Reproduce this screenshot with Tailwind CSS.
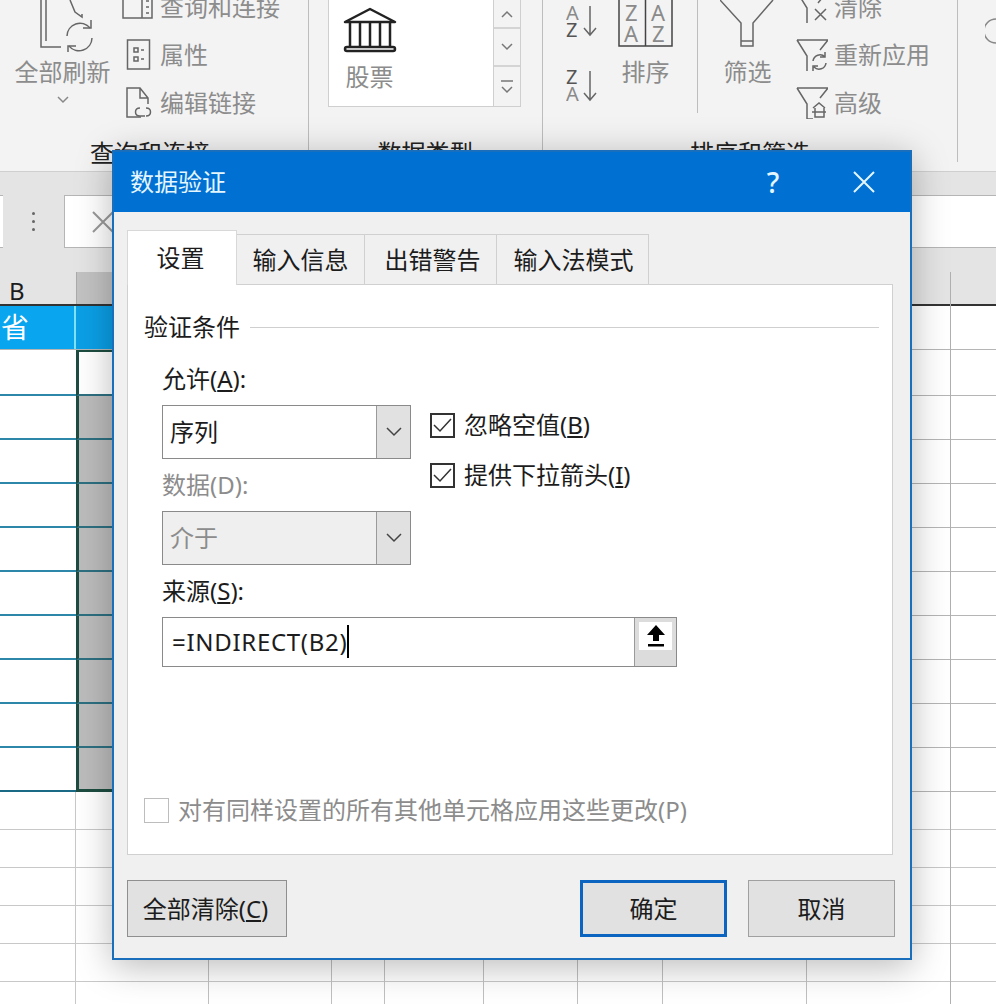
<!DOCTYPE html>
<html lang="zh-CN">
<head>
  <meta charset="UTF-8" />
  <title>数据验证</title>
  <script src="https://cdn.jsdelivr.net/npm/@tailwindcss/browser@4"></script>
</head>
<body class="bg-white">
<div class="relative w-[996px] h-[1004px] overflow-hidden bg-white text-[24px] leading-[30px] text-[#1c1c1c] font-['Noto_Sans','Noto_Sans_CJK_SC',sans-serif]">

  <!-- Ribbon -->
  <div class="flex h-[172px] bg-[#f3f3f3] border-b border-[#cfcfcf] overflow-hidden text-[#8c8c8c]">
    <!-- Queries -->
    <div class="flex flex-col w-[309px] h-[162px] border-r border-[#bdbdbd]">
      <div class="flex h-[138px] shrink-0 pl-[15px]">
        <div class="flex flex-col items-center w-[95px] shrink-0">
          <svg class="w-[95px] h-[52px]" viewBox="0 0 95 52" fill="none" stroke="#666" stroke-width="1.5">
            <path d="M26 0V47H46M31 0V41M55 0l5 12 7 5v-3" />
            <path d="M52 36a13 13 0 0 1 23-8M77 38a13 13 0 0 1-23 8" />
            <path d="M76 20v8h-8M53 54v-8h8" />
          </svg>
          <span class="mt-[5px] whitespace-nowrap">全部刷新</span>
          <svg class="w-[14px] h-[8px] mt-[9px]" viewBox="0 0 14 8" fill="none" stroke="#888" stroke-width="1.5"><path d="M2 1l5 5 5-5" /></svg>
        </div>
        <div class="flex flex-col ml-[12px] -mt-[17px]">
          <div class="flex items-center h-[48px] gap-[6px]">
            <svg class="w-[32px] h-[32px]" viewBox="0 0 32 32" fill="none" stroke="#666" stroke-width="1.5"><path d="M1 0V27H30V0M20 0V27M24 10h3M24 16h3M24 22h3" /></svg>
            <span>查询和连接</span>
          </div>
          <div class="flex items-center h-[48px] gap-[6px]">
            <svg class="w-[32px] h-[32px]" viewBox="0 0 32 32" fill="none" stroke="#666" stroke-width="1.5"><rect x="5.5" y="1" width="22" height="29" /><rect x="12" y="9" width="4" height="4" /><rect x="12" y="18" width="4" height="4" /><path d="M19 11h3M19 20h3" /></svg>
            <span>属性</span>
          </div>
          <div class="flex items-center h-[48px] gap-[6px]">
            <svg class="w-[32px] h-[32px]" viewBox="0 0 32 32" fill="none" stroke="#666" stroke-width="1.5"><path d="M19 30H5V1h13l8 10v6M18 1v10h8" /><path d="M18 21c-6 0-6 8 0 8h5M24 21c6 0 6 8 0 8" /></svg>
            <span>编辑链接</span>
          </div>
        </div>
      </div>
      <div class="h-[24px] shrink-0 text-center pr-[8px] text-[#222]">查询和连接</div>
    </div>

    <!-- Data types -->
    <div class="flex flex-col w-[234px] h-[162px] border-r border-[#bdbdbd]">
      <div class="flex h-[138px] shrink-0 pl-[19px] items-start">
        <div class="flex flex-col items-center w-[165px] h-[107px] pr-[97px] pl-[14px] pt-[7px] bg-white border-l border-b border-[#cfcfcf]">
          <svg class="w-[54px] h-[46px] shrink-0" viewBox="0 0 54 46" fill="none" stroke="#222" stroke-width="2.5" stroke-linejoin="round">
            <path d="M2 15L27 2l25 13zM7 16v24M17 16v24M27 16v24M37 16v24M47 16v24" />
            <rect x="2" y="40" width="50" height="4" rx="2" />
          </svg>
          <span class="mt-[9px] shrink-0">股票</span>
        </div>
        <div class="flex flex-col w-[28px] h-[107px] border border-[#cfcfcf] border-t-0">
          <div class="flex items-center justify-center h-[29px] border-b-2 border-[#d4d4d4]">
            <svg class="w-[12px] h-[8px]" viewBox="0 0 12 8" fill="none" stroke="#777" stroke-width="1.5"><path d="M1 7l5-5 5 5" /></svg>
          </div>
          <div class="flex items-center justify-center h-[38px] border-b-2 border-[#d4d4d4]">
            <svg class="w-[12px] h-[8px]" viewBox="0 0 12 8" fill="none" stroke="#777" stroke-width="1.5"><path d="M1 1l5 5 5-5" /></svg>
          </div>
          <div class="flex items-center justify-center flex-1">
            <svg class="w-[12px] h-[16px]" viewBox="0 0 12 16" fill="none" stroke="#777" stroke-width="1.5"><path d="M0 2h12M1 8l5 5 5-5" /></svg>
          </div>
        </div>
      </div>
      <div class="h-[24px] shrink-0 text-center text-[#222]">数据类型</div>
    </div>

    <!-- Sort and filter -->
    <div class="flex flex-col w-[415px] h-[162px] border-r border-[#bdbdbd]">
      <div class="flex h-[138px] shrink-0 pl-[23px]">
        <div class="flex flex-col w-[32px] pt-[5px] gap-[33px]">
          <svg class="w-[32px] h-[32px]" viewBox="0 0 32 32" fill="none">
            <text x="0" y="15" font-size="20" fill="#8a8a8a" stroke="none">A</text>
            <text x="0" y="32" font-size="20" fill="#555" stroke="none">Z</text>
            <path d="M24 1v29M18 23l6 7 6-7" stroke="#666" stroke-width="1.5" />
          </svg>
          <svg class="w-[32px] h-[32px]" viewBox="0 0 32 32" fill="none">
            <text x="0" y="14" font-size="20" fill="#555" stroke="none">Z</text>
            <text x="0" y="31" font-size="20" fill="#8a8a8a" stroke="none">A</text>
            <path d="M24 1v29M18 23l6 7 6-7" stroke="#666" stroke-width="1.5" />
          </svg>
        </div>
        <div class="flex flex-col items-center w-[55px] ml-[20px]">
          <svg class="w-[55px] h-[47px]" viewBox="0 0 55 47" fill="none">
            <path d="M1 0V46H54V0M27.5 0V46" stroke="#444" stroke-width="1.5" />
            <text x="7" y="21" font-size="22" fill="#8a8a8a">Z</text>
            <text x="6" y="42" font-size="22" fill="#8a8a8a">A</text>
            <text x="33" y="21" font-size="22" fill="#8a8a8a">A</text>
            <text x="34" y="42" font-size="22" fill="#8a8a8a">Z</text>
          </svg>
          <span class="mt-[10px]">排序</span>
        </div>
        <div class="w-[24px] h-[113px] border-r border-[#bdbdbd] box-content"></div>
        <div class="flex flex-col items-center w-[55px] ml-[22px]">
          <svg class="w-[55px] h-[47px]" viewBox="0 0 55 47" fill="none" stroke="#666" stroke-width="1.5"><path d="M0 0L21 23V46H33V23L53 0M21 41H33" /></svg>
          <span class="mt-[10px]">筛选</span>
        </div>
        <div class="flex flex-col ml-[21px] -mt-[17px]">
          <div class="flex items-center h-[48px] gap-[6px]">
            <svg class="w-[32px] h-[32px]" viewBox="0 0 32 32" fill="none" stroke="#666" stroke-width="1.5"><path d="M1 1H31L22 12M1 1L11 17V32M19 18l11 11M30 18L19 29" /></svg>
            <span>清除</span>
          </div>
          <div class="flex items-center h-[48px] gap-[6px]">
            <svg class="w-[32px] h-[32px]" viewBox="0 0 32 32" fill="none" stroke="#666" stroke-width="1.5"><path d="M1 1H32L24 11M1 1L11 17V32" /><path d="M17 22a7 7 0 0 1 12-4M30 24a7 7 0 0 1-12 4M29 13v5h-5M17 32v-5h5" /></svg>
            <span>重新应用</span>
          </div>
          <div class="flex items-center h-[48px] gap-[6px]">
            <svg class="w-[32px] h-[32px]" viewBox="0 0 32 32" fill="none" stroke="#666" stroke-width="1.5"><path d="M1 1H32L24 11M1 1L11 17V32H17" /><path d="M17 21l6-5 6 5M19 21v9h9v-9M16 25h14" /></svg>
            <span>高级</span>
          </div>
        </div>
      </div>
      <div class="h-[24px] shrink-0 text-center text-[#222]">排序和筛选</div>
    </div>

    <div class="pl-[27px] pt-[18px]">
      <svg class="w-[11px] h-[26px]" viewBox="0 0 11 26" fill="none" stroke="#888" stroke-width="1.5"><path d="M11 1a12 12 0 0 0 0 24" /></svg>
    </div>
  </div>

  <!-- Formula bar -->
  <div class="flex h-[98px] pt-[23px] bg-[#e4e4e4]">
    <div class="w-[3px] h-[53px] bg-white border-y border-[#b5b5b5]"></div>
    <div class="flex flex-col justify-center items-center gap-[5px] w-[61px] h-[53px]">
      <div class="w-[3px] h-[3px] rounded-full bg-[#666]"></div>
      <div class="w-[3px] h-[3px] rounded-full bg-[#666]"></div>
      <div class="w-[3px] h-[3px] rounded-full bg-[#666]"></div>
    </div>
    <div class="flex items-center flex-1 h-[53px] pl-[26px] bg-white border-y border-l border-[#b5b5b5]">
      <svg class="w-[24px] h-[24px]" viewBox="0 0 24 24" fill="none" stroke="#999" stroke-width="2"><path d="M2 2l20 20M22 2L2 22" /></svg>
    </div>
  </div>

  <!-- Sheet -->
  <div class="relative">
    <div class="flex h-[36px] bg-[#e4e4e4] border-b-2 border-[#333]">
      <div class="w-[76px] pl-[9px] pt-[6px]">B</div>
      <div class="w-[100px] mt-[2px] bg-[#c2c2c2] border-l border-[#aaa]"></div>
    </div>
    <div class="flex h-[44px] bg-white border-b border-[#b5b5b5]">
      <div class="w-[76px] pl-[1px] pt-[6px] text-[28px] bg-[#0aa5ef] border-r-2 border-[#7fe3f5] text-white overflow-hidden">省</div>
      <div class="w-[100px] bg-[#0b9fe6]"></div>
    </div>

    <div class="flex h-[46px]"><div class="w-[76px] border-b-2 border-[#2d87a8]"></div><div class="w-[100px] bg-white border-l-[3px] border-t-2 border-[#1d4d40] border-b-2 border-b-[#2d6f80]"></div><div class="flex-1 border-b border-[#b5b5b5]"></div></div>
    <div class="flex h-[44px]"><div class="w-[76px] border-b-2 border-[#2d87a8]"></div><div class="w-[100px] bg-[#bcbcbc] border-l-[3px] border-[#1d4d40] border-b-2 border-b-[#2d6f80]"></div><div class="flex-1 border-b border-[#b5b5b5]"></div></div>
    <div class="flex h-[44px]"><div class="w-[76px] border-b-2 border-[#2d87a8]"></div><div class="w-[100px] bg-[#bcbcbc] border-l-[3px] border-[#1d4d40] border-b-2 border-b-[#2d6f80]"></div><div class="flex-1 border-b border-[#b5b5b5]"></div></div>
    <div class="flex h-[44px]"><div class="w-[76px] border-b-2 border-[#2d87a8]"></div><div class="w-[100px] bg-[#bcbcbc] border-l-[3px] border-[#1d4d40] border-b-2 border-b-[#2d6f80]"></div><div class="flex-1 border-b border-[#b5b5b5]"></div></div>
    <div class="flex h-[44px]"><div class="w-[76px] border-b-2 border-[#2d87a8]"></div><div class="w-[100px] bg-[#bcbcbc] border-l-[3px] border-[#1d4d40] border-b-2 border-b-[#2d6f80]"></div><div class="flex-1 border-b border-[#b5b5b5]"></div></div>
    <div class="flex h-[44px]"><div class="w-[76px] border-b-2 border-[#2d87a8]"></div><div class="w-[100px] bg-[#bcbcbc] border-l-[3px] border-[#1d4d40] border-b-2 border-b-[#2d6f80]"></div><div class="flex-1 border-b border-[#b5b5b5]"></div></div>
    <div class="flex h-[44px]"><div class="w-[76px] border-b-2 border-[#2d87a8]"></div><div class="w-[100px] bg-[#bcbcbc] border-l-[3px] border-[#1d4d40] border-b-2 border-b-[#2d6f80]"></div><div class="flex-1 border-b border-[#b5b5b5]"></div></div>
    <div class="flex h-[44px]"><div class="w-[76px] border-b-2 border-[#2d87a8]"></div><div class="w-[100px] bg-[#bcbcbc] border-l-[3px] border-[#1d4d40] border-b-2 border-b-[#2d6f80]"></div><div class="flex-1 border-b border-[#b5b5b5]"></div></div>
    <div class="flex h-[44px]"><div class="w-[76px] border-b-2 border-[#2d87a8]"></div><div class="w-[100px] bg-[#bcbcbc] border-l-[3px] border-[#1d4d40] border-b-2 border-b-[#2d6f80]"></div><div class="flex-1 border-b border-[#b5b5b5]"></div></div>
    <div class="flex h-[44px]"><div class="w-[76px] border-b-2 border-[#1a6a86]"></div><div class="w-[100px] bg-[#bcbcbc] border-l-[3px] border-[#1d4d40] border-b-[3px] border-b-[#1d4d40]"></div><div class="flex-1 border-b border-[#b5b5b5]"></div></div>

    <div class="flex h-[38px]"><div class="w-[76px] border-r border-b border-[#c8c8c8]"></div><div class="flex-1 border-b border-[#c8c8c8]"></div></div>
    <div class="flex h-[38px]"><div class="w-[76px] border-r border-b border-[#c8c8c8]"></div><div class="flex-1 border-b border-[#c8c8c8]"></div></div>
    <div class="flex h-[38px]"><div class="w-[76px] border-r border-b border-[#c8c8c8]"></div><div class="flex-1 border-b border-[#c8c8c8]"></div></div>
    <div class="flex h-[38px]"><div class="w-[76px] border-r border-b border-[#c8c8c8]"></div><div class="flex-1 border-b border-[#c8c8c8]"></div></div>
    <div class="flex h-[38px]"><div class="w-[76px] border-r border-b border-[#c8c8c8]"></div><div class="flex-1 border-b border-[#c8c8c8]"></div></div>
    <div class="flex h-[38px]"><div class="w-[76px] border-r border-[#c8c8c8]"></div><div class="flex-1"></div></div>

    <!-- column lines -->
    <div class="absolute inset-x-0 top-[2px] bottom-0 flex">
      <div class="w-[209px] border-r border-[#c0c0c0]"></div>
      <div class="w-[123px] border-r border-[#c0c0c0]"></div>
      <div class="w-[53px] border-r border-[#c0c0c0]"></div>
      <div class="w-[99px] border-r border-[#c0c0c0]"></div>
      <div class="w-[94px] border-r border-[#c0c0c0]"></div>
      <div class="w-[85px] border-r border-[#c0c0c0]"></div>
      <div class="w-[144px] border-r border-[#c0c0c0]"></div>
      <div class="w-[144px] border-r border-[#b0b0b0]"></div>
    </div>
  </div>

  <!-- Dialog -->
  <div class="absolute z-10 left-[112px] top-[150px] flex flex-col w-[800px] h-[810px] bg-[#f0f0f0] border-2 border-[#1a6fbd] shadow-[0_6px_34px_rgba(0,0,0,0.28)]">
    <div class="flex items-center shrink-0 h-[60px] pl-[16px] bg-[#0071d3] text-[#e4f6ff]">
      <span>数据验证</span>
      <span class="ml-[537px] w-[20px] text-center text-[28px] font-medium">?</span>
      <svg class="ml-[69px] w-[24px] h-[24px]" viewBox="0 0 24 24" fill="none" stroke="#e4f6ff" stroke-width="2"><path d="M2 2l20 20M22 2L2 22" /></svg>
    </div>

    <div class="flex flex-col flex-1 px-[13px] pt-[18px]">
      <!-- Tabs -->
      <div class="flex items-end h-[55px] -mb-[1px] z-10">
        <div class="flex items-center justify-center w-[110px] h-[55px] pr-[3px] bg-white border border-b-0 border-[#d8d8d8]">设置</div>
        <div class="flex items-center justify-center w-[128px] h-[51px] bg-[#f0f0f0] border-t border-r border-b border-[#d0d0d0]">输入信息</div>
        <div class="flex items-center justify-center w-[132px] h-[51px] pl-[4px] bg-[#f0f0f0] border-t border-r border-b border-[#d0d0d0]">出错警告</div>
        <div class="flex items-center justify-center w-[152px] h-[51px] pl-[2px] bg-[#f0f0f0] border-t border-r border-b border-[#d0d0d0]">输入法模式</div>
      </div>

      <!-- Panel -->
      <div class="flex flex-col w-[766px] h-[571px] pl-[16px] bg-white border border-[#d0d0d0]">
        <div class="flex items-center gap-[10px] h-[34px] mt-[25px] pr-[13px]">
          <span>验证条件</span>
          <div class="flex-1 h-[1px] bg-[#cfcfcf]"></div>
        </div>

        <div class="flex pl-[18px]">
          <div class="flex flex-col w-[249px]">
            <div class="mt-[20px]">允许(<span class="underline underline-offset-2">A</span>):</div>
            <div class="flex h-[54px] mt-[11px] border border-[#8a8a8a]">
              <div class="flex flex-1 items-center pl-[7px]">序列</div>
              <div class="flex items-center justify-center w-[34px] bg-[#e1e1e1] border-l border-[#9a9a9a]">
                <svg class="w-[16px] h-[10px]" viewBox="0 0 16 10" fill="none" stroke="#444" stroke-width="1.5"><path d="M1 1l7 7 7-7" /></svg>
              </div>
            </div>
            <div class="mt-[11px] text-[#8c8c8c]">数据(D):</div>
            <div class="flex h-[54px] mt-[11px] bg-[#efefef] border border-[#8a8a8a] text-[#8c8c8c]">
              <div class="flex flex-1 items-center pl-[7px]">介于</div>
              <div class="flex items-center justify-center w-[34px] bg-[#e1e1e1] border-l border-[#9a9a9a]">
                <svg class="w-[16px] h-[10px]" viewBox="0 0 16 10" fill="none" stroke="#444" stroke-width="1.5"><path d="M1 1l7 7 7-7" /></svg>
              </div>
            </div>
          </div>
          <div class="flex flex-col gap-[20px] ml-[19px] pt-[66px]">
            <div class="flex items-center gap-[9px] h-[30px]">
              <div class="flex items-center justify-center w-[25px] h-[25px] border-2 border-[#333]">
                <svg class="w-[19px] h-[15px]" viewBox="0 0 19 15" fill="none" stroke="#333" stroke-width="1.5"><path d="M1 7l6 6L18 1" /></svg>
              </div>
              <span>忽略空值(<span class="underline underline-offset-2">B</span>)</span>
            </div>
            <div class="flex items-center gap-[9px] h-[30px]">
              <div class="flex items-center justify-center w-[25px] h-[25px] border-2 border-[#333]">
                <svg class="w-[19px] h-[15px]" viewBox="0 0 19 15" fill="none" stroke="#333" stroke-width="1.5"><path d="M1 7l6 6L18 1" /></svg>
              </div>
              <span>提供下拉箭头(<span class="underline underline-offset-2">I</span>)</span>
            </div>
          </div>
        </div>

        <div class="pl-[18px] mt-[11px]">来源(<span class="underline underline-offset-2">S</span>):</div>
        <div class="flex w-[515px] h-[50px] ml-[18px] mt-[11px] border border-[#8a8a8a]">
          <div class="flex flex-1 items-center pl-[9px] pb-[1px]">
            <span class="tracking-[0.7px]">=INDIRECT(B2)</span>
            <div class="w-[2px] h-[33px] bg-black"></div>
          </div>
          <div class="w-[42px] bg-[#dcdcdc] border-l border-[#9a9a9a] p-[4px] pb-[16px]">
            <div class="flex items-center justify-center h-full bg-white">
              <svg class="w-[20px] h-[22px]" viewBox="0 0 20 22" fill="#000"><path d="M10 0L19 10H13V16H7V10H1zM2 19H18V21.5H2z" /></svg>
            </div>
          </div>
        </div>

        <div class="flex items-center gap-[9px] mt-auto mb-[29px] text-[#8c8c8c]">
          <div class="w-[25px] h-[25px] border border-[#bdbdbd]"></div>
          <span>对有同样设置的所有其他单元格应用这些更改(P)</span>
        </div>
      </div>

      <!-- Footer buttons -->
      <div class="flex mt-[25px]">
        <button class="w-[160px] h-[57px] pr-[3px] bg-[#e1e1e1] border border-[#8f8f8f]">全部清除(<span class="underline underline-offset-2">C</span>)</button>
        <button class="w-[147px] h-[57px] ml-[293px] bg-[#e1e1e1] border-[3px] border-[#0a64c0]">确定</button>
        <button class="w-[147px] h-[57px] ml-[21px] bg-[#e1e1e1] border border-[#a0a0a0]">取消</button>
      </div>
    </div>
  </div>
</div>
</body>
</html>
